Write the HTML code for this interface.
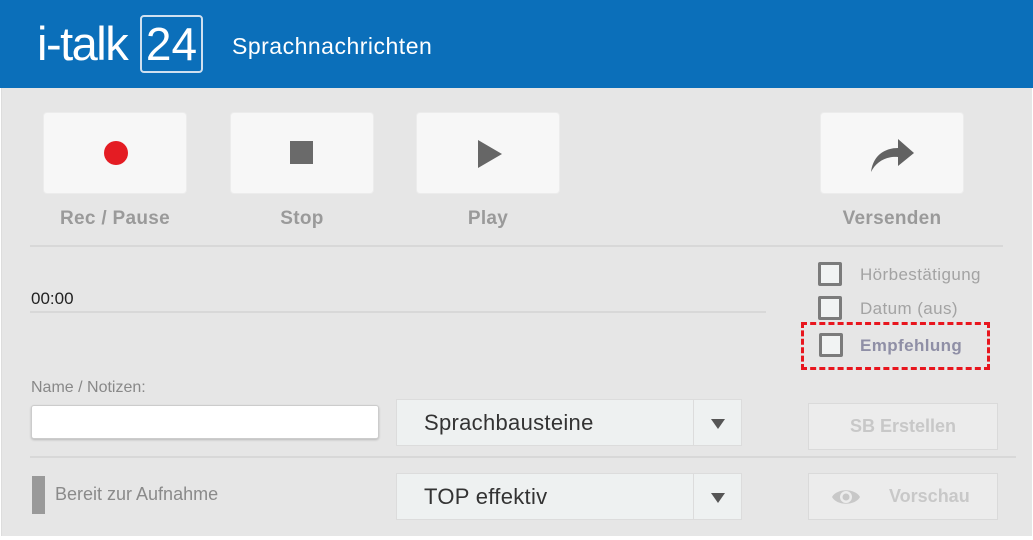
<!DOCTYPE html>
<html><head><meta charset="utf-8"><style>
*{margin:0;padding:0;box-sizing:border-box}
body{width:1033px;height:540px;background:#fff;font-family:"Liberation Sans",Arial,sans-serif;position:relative;overflow:hidden}
.a{position:absolute}
#hdr{left:0;top:0;width:1033px;height:88px;background:#0b6fba}
#main{left:1px;top:88px;width:1031px;height:448px;background:#e6e6e6;border-left:1px solid #ddd}
.btn{background:#f7f7f7;border-radius:4px;border:1px solid #ececec;width:144px;height:82px}
.lbl{font-weight:bold;color:#9a9a9a;font-size:19px;letter-spacing:0.3px;text-align:center;width:144px}
.hr{height:2px;background:#d8d8d8}
.cb{width:24px;height:24px;border:3px solid #7b7b7b;background:#f1f3f3;border-radius:2px}
.cbl{font-size:17px;letter-spacing:0.4px;color:#a3a3a3}
.sel{background:#eef1f1;border:1px solid #dcdcdc;width:346px;height:47px}
.sel span{position:absolute;left:27px;top:10px;font-size:22px;color:#333;letter-spacing:0.3px}
.sel i{position:absolute;left:296px;top:0;width:1px;height:45px;background:#dcdcdc}
.sel b{position:absolute;left:314px;top:19px;width:0;height:0;border-left:7px solid transparent;border-right:7px solid transparent;border-top:10px solid #555}
.gb{background:#ececec;border:1px solid #dadada;width:190px;height:47px;color:#c8c8c8;font-size:18px;font-weight:bold}
</style></head><body>
<div class="a" id="hdr">
 <div class="a" style="left:37px;top:16px;font-size:47px;color:#fff;letter-spacing:-1.5px">i-talk</div>
 <div class="a" style="left:140px;top:15px;width:63px;height:58px;border:2px solid #cfe0f0;border-radius:4px;color:#fff;font-size:46px;text-align:center;line-height:54px">24</div>
 <div class="a" style="left:232px;top:33px;font-size:23px;letter-spacing:0.5px;color:#fff">Sprachnachrichten</div>
</div>
<div class="a" id="main"></div>

<div class="a btn" style="left:43px;top:112px"></div>
<div class="a" style="left:104px;top:141px;width:24px;height:24px;border-radius:50%;background:#e41c23"></div>
<div class="a lbl" style="left:43px;top:208px">Rec / Pause</div>

<div class="a btn" style="left:230px;top:112px"></div>
<div class="a" style="left:290px;top:141px;width:23px;height:23px;background:#6a6a6a"></div>
<div class="a lbl" style="left:230px;top:208px">Stop</div>

<div class="a btn" style="left:416px;top:112px"></div>
<div class="a" style="left:478px;top:140px;width:0;height:0;border-top:14px solid transparent;border-bottom:14px solid transparent;border-left:24px solid #666"></div>
<div class="a lbl" style="left:416px;top:208px">Play</div>

<div class="a btn" style="left:820px;top:112px"></div>
<svg class="a" style="left:866px;top:136px" width="52" height="38" viewBox="0 0 52 38"><path d="M5 36 C7 20 18 12 32 12 L32 3 L48 17 L32 30 L32 21 C20 20 10 26 5 36Z" fill="#626262"/></svg>
<div class="a lbl" style="left:820px;top:208px">Versenden</div>

<div class="a hr" style="left:30px;top:245px;width:973px"></div>
<div class="a" style="left:31px;top:289px;font-size:17px;color:#222">00:00</div>
<div class="a hr" style="left:30px;top:311px;width:736px"></div>

<div class="a cb" style="left:818px;top:262px"></div><div class="a cbl" style="left:860px;top:265px">Hörbestätigung</div>
<div class="a cb" style="left:818px;top:296px"></div><div class="a cbl" style="left:860px;top:299px">Datum (aus)</div>
<div class="a cb" style="left:819px;top:333px"></div><div class="a cbl" style="left:860px;top:336px;font-weight:bold;color:#8f8fa6">Empfehlung</div>
<div class="a" style="left:801px;top:322px;width:189px;height:48px;border:3px dashed #e8161e"></div>

<div class="a" style="left:31px;top:379px;font-size:16px;color:#888">Name / Notizen:</div>
<div class="a" style="left:31px;top:405px;width:348px;height:34px;background:#fff;border:1px solid #ccc;border-radius:3px;box-shadow:0 1px 2px rgba(0,0,0,.2)"></div>
<div class="a sel" style="left:396px;top:399px"><span>Sprachbausteine</span><i></i><b></b></div>
<div class="a gb" style="left:808px;top:403px;line-height:45px;text-align:center">SB Erstellen</div>

<div class="a hr" style="left:30px;top:456px;width:986px"></div>
<div class="a" style="left:32px;top:476px;width:13px;height:38px;background:#999"></div>
<div class="a" style="left:55px;top:484px;font-size:18px;color:#8a8a8a">Bereit zur Aufnahme</div>
<div class="a sel" style="left:396px;top:473px"><span>TOP effektiv</span><i></i><b></b></div>
<div class="a gb" style="left:808px;top:473px;line-height:45px">
 <svg class="a" style="left:22px;top:12px" width="30" height="22" viewBox="0 0 30 22"><path d="M1 11 C6 2 24 2 29 11 C24 20 6 20 1 11Z" fill="#c8c8c8"/><circle cx="15" cy="11" r="6" fill="#ececec"/><circle cx="15" cy="11" r="3.5" fill="#c8c8c8"/></svg>
 <span class="a" style="left:80px;top:0">Vorschau</span>
</div>
</body></html>
